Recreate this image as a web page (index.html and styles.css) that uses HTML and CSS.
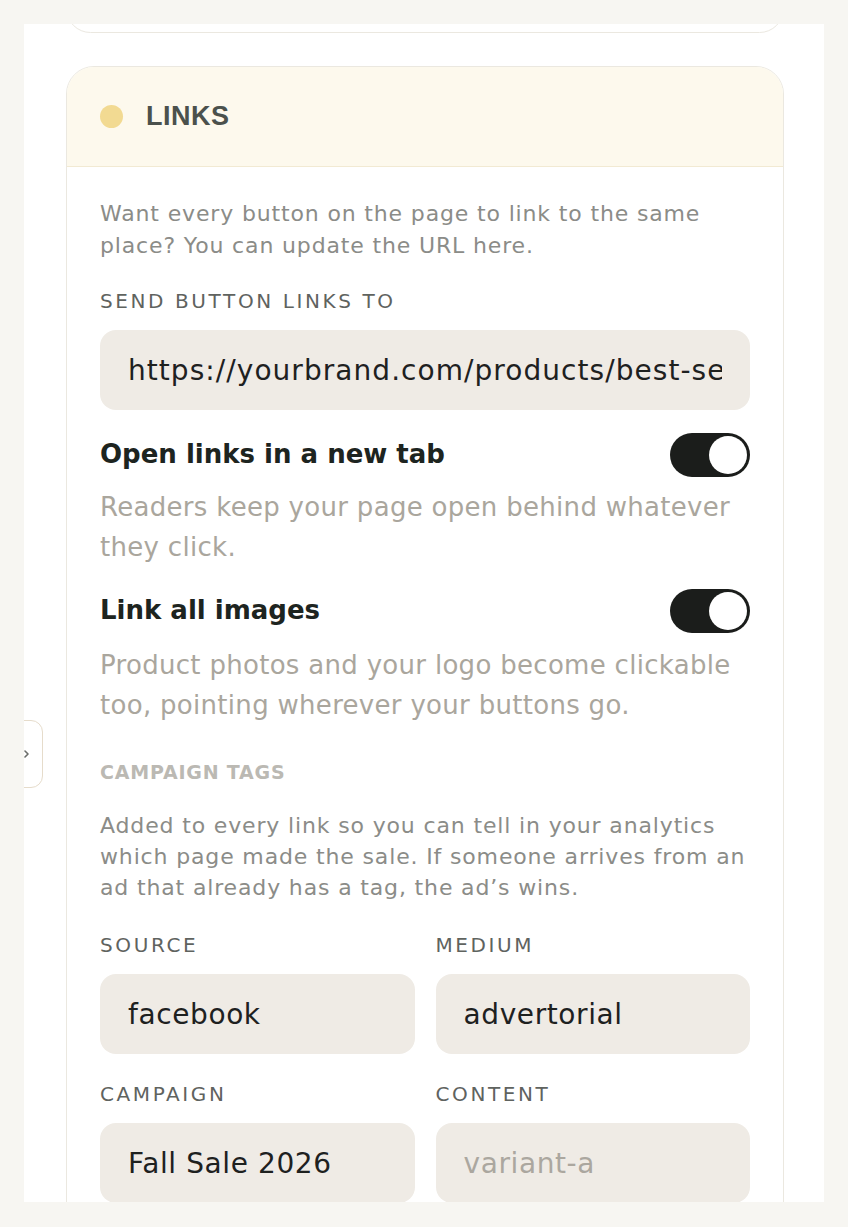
FILE: index.html
```html
<!DOCTYPE html>
<html lang="en">
<head>
<meta charset="utf-8">
<title>Links settings</title>
<link rel="stylesheet" href="styles.css">
</head>
<body>
<div class="panel">
  <div class="collapse-tab">
    <svg width="8" height="10" viewBox="0 0 8 10"><path d="M2 2 L5 5 L2 8" fill="none" stroke="#6b6d69" stroke-width="1.6" stroke-linecap="round" stroke-linejoin="round"/></svg>
  </div>
  <div class="scroll">
    <div class="card prev-card"></div>
    <section class="card links-card">
      <header class="card-head">
        <span class="dot"></span>
        <h2 class="card-title">LINKS</h2>
      </header>
      <div class="card-body">
        <p class="help">Want every button on the page to link to the same place? You can update the URL here.</p>
        <div class="field field-url">
          <label class="label">SEND BUTTON LINKS TO</label>
          <div class="input input-url"><span class="input-text">https://yourbrand.com/products/best-sellers</span></div>
        </div>
        <div class="toggle-row">
          <span class="toggle-label">Open links in a new tab</span>
          <span class="toggle"><span class="knob"></span></span>
        </div>
        <p class="toggle-help">Readers keep your page open behind whatever they click.</p>
        <div class="toggle-row second">
          <span class="toggle-label">Link all images</span>
          <span class="toggle"><span class="knob"></span></span>
        </div>
        <p class="toggle-help second-help">Product photos and your logo become clickable too, pointing wherever your buttons go.</p>
        <h3 class="section-label">CAMPAIGN TAGS</h3>
        <p class="help help-tags">Added to every link so you can tell in your analytics which page made the sale. If someone arrives from an ad that already has a tag, the ad’s wins.</p>
        <div class="grid">
          <div class="field">
            <label class="label">SOURCE</label>
            <div class="input"><span class="input-text">facebook</span></div>
          </div>
          <div class="field">
            <label class="label">MEDIUM</label>
            <div class="input"><span class="input-text">advertorial</span></div>
          </div>
          <div class="field">
            <label class="label">CAMPAIGN</label>
            <div class="input"><span class="input-text">Fall Sale 2026</span></div>
          </div>
          <div class="field">
            <label class="label">CONTENT</label>
            <div class="input placeholder"><span class="input-text">variant-a</span></div>
          </div>
        </div>
      </div>
    </section>
  </div>
</div>
</body>
</html>
```
FILE: styles.css
```css
* { box-sizing: border-box; }
html, body { margin: 0; padding: 0; }
body {
  background: #f7f6f2;
  padding: 24px;
  font-family: "DejaVu Sans", "Noto Sans", sans-serif;
  color: #1d211e;
}
.panel {
  position: relative;
  background: #ffffff;
  height: 1178px;
  overflow: hidden;
}
.collapse-tab {
  position: absolute;
  left: -22px;
  top: 696px;
  width: 41px;
  height: 68px;
  background: #fff;
  border: 1.5px solid #e6dccb;
  border-radius: 12px;
  display: flex;
  align-items: center;
  justify-content: flex-end;
  padding-right: 11px;
  z-index: 2;
}
.collapse-tab svg { display: block; }
.scroll {
  margin-top: -40px;
  padding: 0 40px 0 42px;
}
.card {
  border: 1.5px solid #ebe8e0;
  border-radius: 28px;
  background: #fff;
}
.prev-card { height: 49px; }
.links-card {
  margin-top: 33px;
  overflow: hidden;
}
.card-head {
  height: 100px;
  background: #fdf9ed;
  border-bottom: 1.5px solid #f2ead3;
  display: flex;
  align-items: center;
  padding-left: 33px;
  gap: 23px;
}
.dot {
  width: 23px;
  height: 23px;
  border-radius: 50%;
  background: #f2da92;
}
.card-title {
  margin: 0;
  font-family: "Liberation Sans", Arial, sans-serif;
  font-size: 27px;
  font-weight: 700;
  letter-spacing: 0.5px;
  color: #4b514c;
}
.card-body {
  padding: 31px 33px 40px 33px;
}
.help {
  margin: 0 -8px 0 0;
  font-size: 22px;
  line-height: 32px;
  letter-spacing: 0.85px;
  color: #8b8c88;
}
.field { display: flex; flex-direction: column; }
.field-url { margin-top: 27px; }
.label {
  font-size: 20px;
  line-height: 24px;
  letter-spacing: 2.6px;
  color: #5f635f;
  margin-bottom: 17px;
}
.input {
  height: 80px;
  border-radius: 16px;
  background: #efebe5;
  padding: 0 28px;
  display: flex;
  align-items: center;
  font-size: 28px;
  letter-spacing: 0.6px;
  color: #1e211f;
  white-space: nowrap;
}
.input-url { letter-spacing: 1.05px; }
.input-text {
  display: block;
  overflow: hidden;
  flex: 1;
  min-width: 0;
}
.input.placeholder { color: #aba79f; }
.toggle-row {
  margin-top: 23px;
  display: flex;
  align-items: center;
  justify-content: space-between;
}
.toggle-row.second { margin-top: 22px; }
.toggle-label {
  font-size: 26px;
  font-weight: 700;
  color: #1d2420;
  margin-top: -3px;
}
.toggle {
  width: 80px;
  height: 44px;
  border-radius: 22px;
  background: #1b1d1b;
  display: flex;
  align-items: center;
  justify-content: flex-end;
  padding-right: 3px;
}
.knob {
  width: 38px;
  height: 38px;
  border-radius: 50%;
  background: #fff;
}
.toggle-help {
  margin: 10px -8px 0 0;
  font-size: 26px;
  line-height: 40px;
  letter-spacing: 0.3px;
  color: #aaa69d;
}
.toggle-help.second-help { margin-top: 12px; }
.section-label {
  margin: 35px 0 0 0;
  font-size: 19px;
  line-height: 24px;
  font-weight: 700;
  letter-spacing: 0.8px;
  color: #bbb9b3;
}
.help-tags {
  margin-top: 26px;
  line-height: 31px;
}
.grid {
  margin-top: 30px;
  display: grid;
  grid-template-columns: 1fr 1fr;
  column-gap: 21px;
  row-gap: 28px;
}
```
